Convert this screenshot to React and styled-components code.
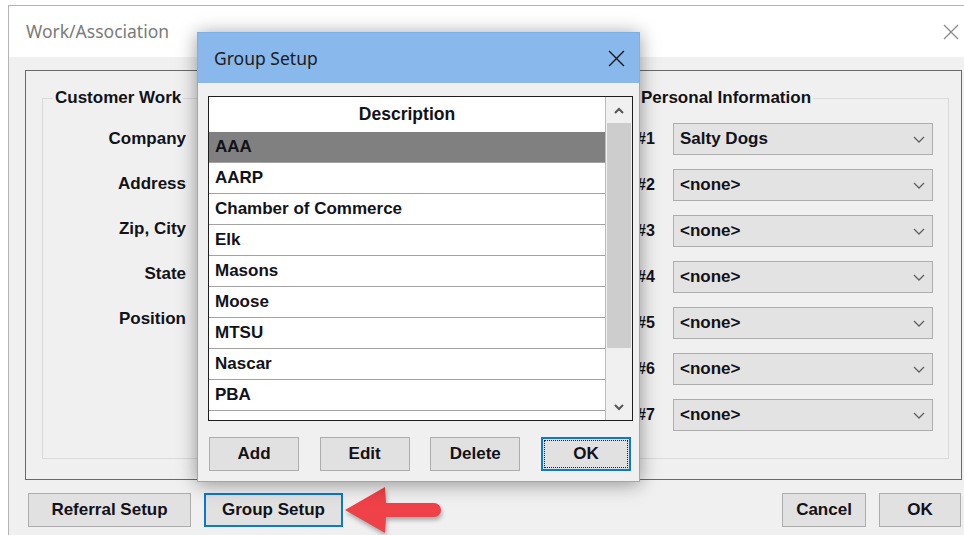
import React from "react";
import styled, { createGlobalStyle } from "styled-components";

const groups = [
  "AAA",
  "AARP",
  "Chamber of Commerce",
  "Elk",
  "Masons",
  "Moose",
  "MTSU",
  "Nascar",
  "PBA",
  "",
];

const workFields = ["Company", "Address", "Zip, City", "State", "Position"];

const personal = ["Salty Dogs", "<none>", "<none>", "<none>", "<none>", "<none>", "<none>"];

const App = () => {
  return (
    <>
      <GlobalStyle />
      <Screen>
        <Window>
          <TitleBar>
            <WindowTitle>Work/Association</WindowTitle>
            <CloseIcon size={16} color="#8a8a8a" />
          </TitleBar>
          <WindowBody>
            <MainPanel>
              <GroupBox>
                <Legend>Customer Work</Legend>
                <LabelColumn>
                  {workFields.map((f) => (
                    <FieldLabel key={f}>{f}</FieldLabel>
                  ))}
                </LabelColumn>
              </GroupBox>
              <GroupBox fixed>
                <Legend>Personal Information</Legend>
                <SelectList>
                  {personal.map((v, i) => (
                    <SelectRow key={i}>
                      <SlotLabel>#{i + 1}</SlotLabel>
                      <Select>
                        <span>{v}</span>
                        <Chevron />
                      </Select>
                    </SelectRow>
                  ))}
                </SelectList>
              </GroupBox>
            </MainPanel>
            <ButtonBar>
              <DialogButton width={163}>Referral Setup</DialogButton>
              <DialogButton width={139} focused>
                Group Setup
              </DialogButton>
              <PointerArrow />
              <Spacer />
              <DialogButton width={84}>Cancel</DialogButton>
              <DialogButton width={82}>OK</DialogButton>
            </ButtonBar>
          </WindowBody>

          <Modal>
            <ModalTitle>
              <span>Group Setup</span>
              <CloseIcon size={17} color="#1a1a1a" />
            </ModalTitle>
            <ModalBody>
              <Grid>
                <GridColumn>
                  <GridHeader>Description</GridHeader>
                  {groups.map((g, i) => (
                    <GridRow key={i} selected={i === 0}>
                      {g}
                    </GridRow>
                  ))}
                </GridColumn>
                <ScrollBar>
                  <ScrollArrow dir="up" />
                  <ScrollTrack>
                    <ScrollThumb />
                  </ScrollTrack>
                  <ScrollArrow dir="down" />
                </ScrollBar>
              </Grid>
              <ModalButtons>
                <DialogButton width={90}>Add</DialogButton>
                <DialogButton width={90}>Edit</DialogButton>
                <DialogButton width={90}>Delete</DialogButton>
                <DialogButton width={90} focused dotted>
                  OK
                </DialogButton>
              </ModalButtons>
            </ModalBody>
          </Modal>
        </Window>
      </Screen>
    </>
  );
};

export default App;

const CloseIcon = ({ size, color }) => (
  <svg width={size} height={size} viewBox="0 0 16 16">
    <path d="M1 1 L15 15 M15 1 L1 15" stroke={color} strokeWidth="1.3" fill="none" />
  </svg>
);

const Chevron = () => (
  <svg width="12" height="7" viewBox="0 0 12 7">
    <path d="M1 1 L6 6 L11 1" stroke="#606060" strokeWidth="1.3" fill="none" />
  </svg>
);

const ScrollArrow = ({ dir }) => (
  <ArrowCell>
    <svg width="10" height="7" viewBox="0 0 10 7">
      <path
        d={dir === "up" ? "M1 6 L5 2 L9 6" : "M1 1 L5 5 L9 1"}
        stroke="#555"
        strokeWidth="2"
        fill="none"
      />
    </svg>
  </ArrowCell>
);

// red callout pointing at the Group Setup button
const PointerArrow = () => (
  <ArrowSvg width="100" height="48" viewBox="0 0 100 48">
    <path
      d="M2 24 L42 1 L43 17 L91 17 A7 7 0 0 1 91 31 L43 31 L42 47 Z"
      fill="#ef4148"
    />
  </ArrowSvg>
);

const GlobalStyle = createGlobalStyle`
  html, body {
    margin: 0;
    padding: 0;
    background: #ffffff;
    overflow: hidden;
  }
  * {
    box-sizing: border-box;
  }
`;

const Screen = styled.div`
  width: 964px;
  height: 535px;
  padding: 5px 0 0 8px;
  font-family: "Liberation Sans", Arial, sans-serif;
  color: #121218;
`;

const Window = styled.div`
  position: relative;
  width: 956px;
  height: 530px;
  border-top: 1px solid #b4b4b4;
  border-left: 1px solid #b4b4b4;
  background: #f0f0f0;
  display: flex;
  flex-direction: column;
`;

const TitleBar = styled.div`
  height: 51px;
  background: #ffffff;
  display: flex;
  align-items: center;
  justify-content: space-between;
  padding: 0 5px 0 17px;
`;

const WindowTitle = styled.div`
  font-family: "Noto Sans", "Open Sans", sans-serif;
  font-size: 17.5px;
  color: #7a7a7a;
  margin-top: -1px;
`;

const WindowBody = styled.div`
  flex: 1;
  padding: 13px 2px 0 16px;
  display: flex;
  flex-direction: column;
`;

const MainPanel = styled.div`
  height: 410px;
  border: 1px solid #6a6a6a;
  display: flex;
  gap: 16px;
  padding: 17px 12px 20px 16px;
`;

const GroupBox = styled.fieldset`
  margin: 0;
  padding: 0;
  border: 1px solid #dadada;
  flex: ${(p) => (p.fixed ? "0 0 321px" : "1")};
  min-width: 0;
`;

const Legend = styled.legend`
  margin-left: 10px;
  padding: 0 2px;
  font-size: 17px;
  font-weight: 700;
  line-height: 20px;
`;

const LabelColumn = styled.div`
  width: 143px;
  padding-top: 21px;
  display: flex;
  flex-direction: column;
  align-items: flex-end;
`;

const FieldLabel = styled.div`
  height: 45px;
  line-height: 20px;
  font-size: 17px;
  font-weight: 700;
`;

const SelectList = styled.div`
  padding: 15px 15px 0 8px;
  display: flex;
  flex-direction: column;
  gap: 14px;
`;

const SelectRow = styled.div`
  display: flex;
  align-items: center;
`;

const SlotLabel = styled.div`
  width: 36px;
  font-size: 16px;
  font-weight: 700;
`;

const Select = styled.div`
  flex: 1;
  height: 32px;
  background: #e3e3e3;
  border: 1px solid #adadad;
  display: flex;
  align-items: center;
  justify-content: space-between;
  padding: 0 7px 0 6px;
  font-size: 17px;
  font-weight: 700;
`;

const ButtonBar = styled.div`
  margin-top: 13px;
  padding: 0 1px 0 3px;
  height: 34px;
  display: flex;
  align-items: center;
  gap: 13px;
`;

const Spacer = styled.div`
  flex: 1;
`;

const ArrowSvg = styled.svg`
  margin-left: -13px;
  flex-shrink: 0;
  filter: drop-shadow(1px 3px 2px rgba(0, 0, 0, 0.3));
`;

const DialogButton = styled.div`
  position: relative;
  width: ${(p) => p.width}px;
  height: 34px;
  flex-shrink: 0;
  background: #e1e1e1;
  border: ${(p) => (p.focused ? "2px solid #0a78d4" : "1px solid #adadad")};
  display: flex;
  align-items: center;
  justify-content: center;
  font-size: 17px;
  font-weight: 700;

  &::after {
    content: "";
    display: ${(p) => (p.dotted ? "block" : "none")};
    position: absolute;
    inset: 1px;
    border: 1px dotted #222;
  }
`;

const Modal = styled.div`
  position: absolute;
  left: 188px;
  top: 26px;
  width: 443px;
  height: 450px;
  border: 1px solid #7eaee3;
  background: #f0f0f0;
  box-shadow: 0 2px 18px rgba(0, 0, 0, 0.4);
  display: flex;
  flex-direction: column;
`;

const ModalTitle = styled.div`
  height: 50px;
  background: #89b8ec;
  display: flex;
  align-items: center;
  justify-content: space-between;
  padding: 0 14px 0 16px;
  font-family: "Noto Sans", "Open Sans", sans-serif;
  font-size: 17.5px;
  color: #1c1c1c;
`;

const ModalBody = styled.div`
  flex: 1;
  padding: 13px 6px 0 10px;
  display: flex;
  flex-direction: column;
`;

const Grid = styled.div`
  height: 325px;
  border: 1px solid #1e1e1e;
  background: #ffffff;
  display: flex;
  overflow: hidden;
`;

const GridColumn = styled.div`
  flex: 1;
  display: flex;
  flex-direction: column;
  border-right: 1px solid #bcbcbc;
`;

const GridHeader = styled.div`
  height: 35px;
  flex-shrink: 0;
  display: flex;
  align-items: center;
  justify-content: center;
  font-size: 17.5px;
  font-weight: 700;
`;

const GridRow = styled.div`
  height: 31px;
  flex-shrink: 0;
  display: flex;
  align-items: center;
  padding-left: 6px;
  background: ${(p) => (p.selected ? "#808080" : "#ffffff")};
  border-bottom: 1px solid #a2a2a2;
  font-size: 17px;
  font-weight: 700;
`;

const ScrollBar = styled.div`
  width: 26px;
  display: flex;
  flex-direction: column;
  background: #f0f0f0;
`;

const ArrowCell = styled.div`
  height: 26px;
  display: flex;
  align-items: center;
  justify-content: center;
`;

const ScrollTrack = styled.div`
  flex: 1;
  padding: 0 1px;
`;

const ScrollThumb = styled.div`
  height: 225px;
  background: #cdcdcd;
`;

const ModalButtons = styled.div`
  margin-top: 16px;
  padding: 0 2px 0 1px;
  display: flex;
  justify-content: space-between;
`;
